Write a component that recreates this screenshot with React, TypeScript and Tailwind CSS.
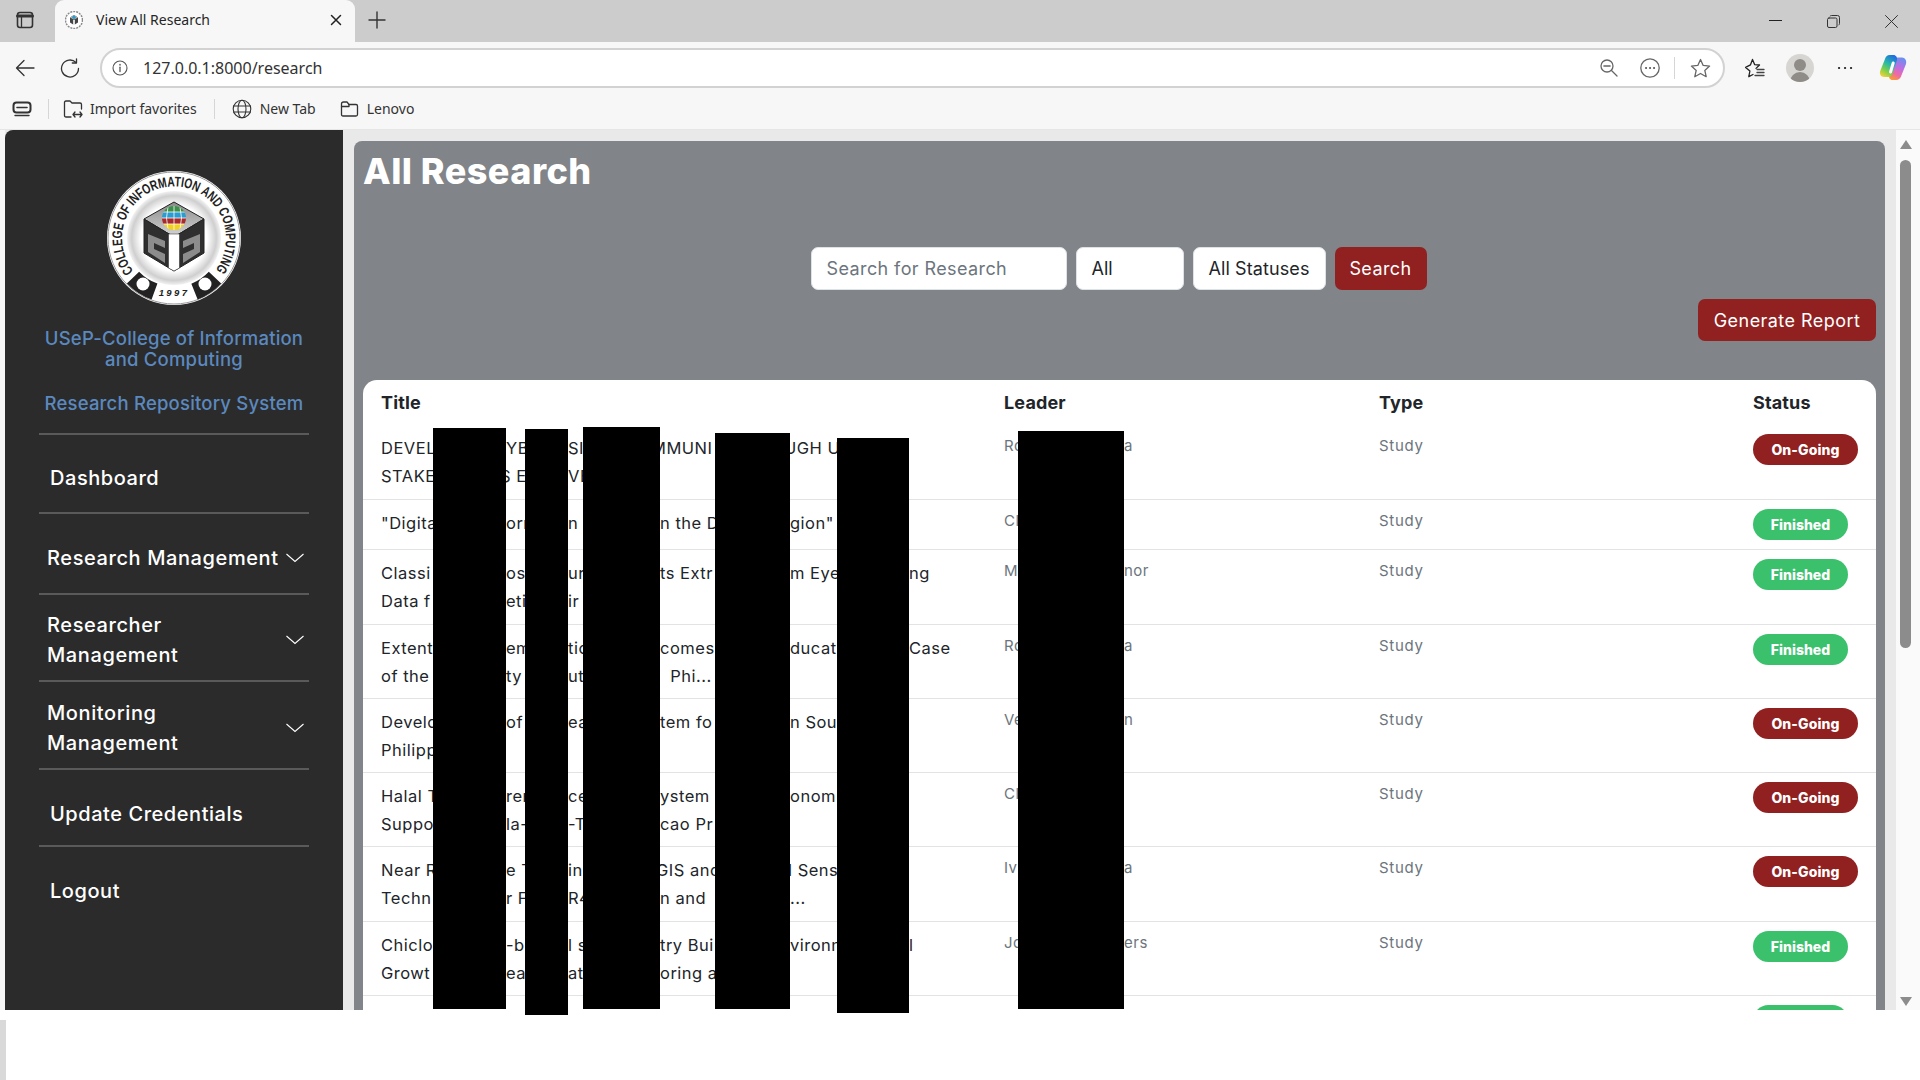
import React from "react";

const chrome = "font-['Noto_Sans','Open_Sans',sans-serif]";
const ui = "font-['Inter',sans-serif]";

function Logo() {
  return (
    <svg width="134" height="134" viewBox="0 0 134 134">
      <defs>
        <radialGradient id="ring" cx="50%" cy="50%" r="50%">
          <stop offset="70%" stopColor="#ffffff" />
          <stop offset="90%" stopColor="#cfcfcf" />
          <stop offset="100%" stopColor="#f2f2f2" />
        </radialGradient>
        <linearGradient id="topface" x1="0" y1="0" x2="0" y2="1">
          <stop offset="0%" stopColor="#8a8a8a" />
          <stop offset="100%" stopColor="#d5d5d5" />
        </linearGradient>
        <path id="arc" d="M26.5 100 A52 52 0 1 1 107.5 100" />
        <clipPath id="globe"><circle cx="67" cy="47" r="12" /></clipPath>
      </defs>
      <circle cx="67" cy="67" r="67" fill="#ffffff" />
      <circle cx="67" cy="67" r="66" fill="none" stroke="#9a9a9a" strokeWidth="1" />
      <circle cx="67" cy="67" r="47" fill="url(#ring)" />
      <text fontFamily="'Liberation Sans',sans-serif" fontWeight="700" fontSize="14" fill="#222222">
        <textPath href="#arc" textLength="232" lengthAdjust="spacingAndGlyphs">COLLEGE OF INFORMATION AND COMPUTING</textPath>
      </text>
      <path d="M26 106.6A57 57 0 0 0 47.5 120.6" fill="none" stroke="#222222" strokeWidth="17" />
      <path d="M87.5 120.6A57 57 0 0 0 108 106.6" fill="none" stroke="#222222" strokeWidth="17" />
      <circle cx="36" cy="113" r="6.5" fill="#ffffff" />
      <circle cx="98" cy="113" r="6.5" fill="#ffffff" />
      <text x="67" y="125" textAnchor="middle" fontFamily="'Liberation Sans',sans-serif" fontWeight="700" fontStyle="italic" fontSize="9.5" letterSpacing="2.4" fill="#222222">1997</text>
      <path d="M67 31L97 48L67 66L37 48Z" fill="url(#topface)" stroke="#222222" strokeWidth="1" />
      <path d="M37 48L67 66V100L37 82Z" fill="#2f2f2f" stroke="#222222" strokeWidth="1" />
      <path d="M97 48L67 66V100L97 82Z" fill="#2f2f2f" stroke="#222222" strokeWidth="1" />
      <path d="M41 63L58 70V77L47 72V78L58 83V92L41 81Z" fill="#8c8c8c" />
      <path d="M93 63L76 70V77L87 72V78L76 83V92L93 81Z" fill="#8c8c8c" />
      <path d="M61.5 63H72.5V97L67 100L61.5 97Z" fill="#ffffff" stroke="#222222" strokeWidth="0.5" />
      <g clipPath="url(#globe)">
        <rect x="55" y="35" width="24" height="6" fill="#3b8f4a" />
        <rect x="55" y="41" width="24" height="6" fill="#2b9ccf" />
        <rect x="55" y="47" width="24" height="6" fill="#a82a2a" />
        <rect x="55" y="53" width="24" height="6" fill="#f1d21e" />
        <path d="M55 41H79M55 47H79M55 53H79M67 35V59M61 36Q58 47 61 58M73 36Q76 47 73 58" stroke="#ffffff" strokeWidth="0.8" fill="none" />
      </g>
    </svg>
  );
}

function Favicon() {
  return (
    <svg width="18" height="18" viewBox="0 0 18 18">
      <circle cx="9" cy="9" r="8.5" fill="#ffffff" stroke="#8a8a8a" strokeWidth="1.5" strokeDasharray="2 1" />
      <path d="M9 4L13 6.4V11.4L9 14L5 11.4V6.4Z" fill="#444444" />
      <path d="M9 4L13 6.4L9 8.8L5 6.4Z" fill="#b5b5b5" />
      <circle cx="9" cy="6.2" r="1.7" fill="#2b9ccf" />
      <rect x="8.2" y="9" width="1.6" height="5" fill="#ffffff" />
    </svg>
  );
}

function I({ w, h, children }: { w: number; h: number; children: React.ReactNode }) {
  return (
    <svg width={w} height={h} viewBox={`0 0 ${w} ${h}`} fill="none" stroke="#333333" strokeWidth="1.3" strokeLinecap="round" strokeLinejoin="round" className="shrink-0">
      {children}
    </svg>
  );
}

function Copilot() {
  return (
    <svg width="28" height="27" viewBox="0 0 28 27" className="shrink-0">
      <defs>
        <linearGradient id="cpa" x1="0.7" y1="0" x2="0.2" y2="1">
          <stop offset="0%" stopColor="#1f6fe0" />
          <stop offset="40%" stopColor="#27b8a8" />
          <stop offset="70%" stopColor="#7bd04a" />
          <stop offset="100%" stopColor="#f4d03a" />
        </linearGradient>
        <linearGradient id="cpb" x1="0.7" y1="0" x2="0.3" y2="1">
          <stop offset="0%" stopColor="#6a8ff0" />
          <stop offset="45%" stopColor="#c56be0" />
          <stop offset="75%" stopColor="#f06aa0" />
          <stop offset="100%" stopColor="#f79a3a" />
        </linearGradient>
      </defs>
      <path d="M17 26C20 26 21.5 24 22.2 22L27 10C28 6.5 26 3.5 23 3.5H19C16.5 3.5 15 5 14.3 7L10 21C9.5 23.5 11 26 13.5 26Z" fill="url(#cpb)" />
      <path d="M11 1C8 1 6.5 3 6 5L1.2 17C0.2 20 2 23 5 23H9C11.5 23 13 21.5 13.7 19.5L18 6C18.5 3.5 17 1 14.5 1Z" fill="url(#cpa)" />
      <path d="M14.2 9L11.5 18" stroke="#ffffff" strokeWidth="3" strokeLinecap="round" />
    </svg>
  );
}

function TabBar() {
  return (
    <div className="flex h-[42px] items-end bg-[#cccccc]">
      <div className="flex h-[42px] w-[55px] items-center pb-[2px] pl-[16px]">
        <I w={18} h={18}>
          <rect x="1.5" y="1.5" width="15" height="15" rx="2.5" strokeWidth="1.6" />
          <path d="M1.5 5H16.5" strokeWidth="3" />
          <path d="M5.5 5V16" />
        </I>
      </div>
      <div className="flex h-[42px] w-[300px] items-center rounded-t-[9px] bg-[#f7f7f7] pb-[2px] pl-[10px] pr-[13px]">
        <Favicon />
        <span className="ml-[13px] flex-1 text-[14px] leading-none text-[#262626]">View All Research</span>
        <I w={12} h={12}>
          <path d="M1.5 1.5L10.5 10.5M10.5 1.5L1.5 10.5" stroke="#222222" strokeWidth="1.5" />
        </I>
      </div>
      <div className="flex h-[42px] items-center pb-[3px] pl-[13px]">
        <I w={18} h={18}>
          <path d="M9 1V17M1 9H17" strokeWidth="1.4" />
        </I>
      </div>
      <div className="flex-1" />
      <div className="flex h-[42px] items-start pt-[15px]">
        <div className="mr-[45px] mt-[5px] h-px w-[13px] bg-[#222222]" />
        <div className="mr-[45px]">
          <I w={13} h={13}>
            <rect x="0.5" y="3" width="9.5" height="9.5" rx="1.5" strokeWidth="1" />
            <path d="M3 1.2Q3.5 0.5 4.5 0.5H10.5Q12.5 0.5 12.5 2.5V8.5Q12.5 9.5 11.8 10" strokeWidth="1" />
          </I>
        </div>
        <div className="mr-[22px]">
          <I w={13} h={13}>
            <path d="M0.5 0.5L12.5 12.5M12.5 0.5L0.5 12.5" strokeWidth="1" />
          </I>
        </div>
      </div>
    </div>
  );
}

function Toolbar() {
  return (
    <div className="flex h-[46px] items-center bg-[#f7f7f7] pt-[5px]">
      <div className="ml-[15px]">
        <I w={20} h={18}>
          <path d="M19 9H1.5M9 1.5L1.5 9L9 16.5" />
        </I>
      </div>
      <div className="ml-[25px]">
        <I w={20} h={20}>
          <path d="M16.5 0.8V5H12.3" />
          <path d="M16 4.5A8.5 8.5 0 1 0 18.5 10.5" />
        </I>
      </div>
      <div className="ml-[20px] flex h-[40px] w-[1625px] items-center rounded-full border-2 border-[#d2d2d2] bg-white">
        <div className="ml-[10px]">
          <I w={16} h={16}>
            <circle cx="8" cy="8" r="7" stroke="#555555" strokeWidth="1.1" />
            <path d="M8 7.2V11.5" stroke="#555555" />
            <path d="M8 4.6V4.9" stroke="#555555" strokeWidth="1.5" />
          </I>
        </div>
        <span className="ml-[15px] flex-1 text-[16px] leading-none text-[#333333]">127.0.0.1:8000/research</span>
        <div className="mr-[22px]">
          <I w={18} h={18}>
            <circle cx="7" cy="7" r="6" stroke="#666666" />
            <path d="M4 7H10" stroke="#666666" strokeWidth="1.6" />
            <path d="M11.5 11.5L17 17" stroke="#666666" />
          </I>
        </div>
        <div className="mr-[14px]">
          <I w={20} h={20}>
            <circle cx="10" cy="10" r="9.2" stroke="#666666" />
            <path d="M6 10H6.1M10 10H10.1M14 10H14.1" stroke="#555555" strokeWidth="2" />
          </I>
        </div>
        <div className="mr-[15px] h-[22px] w-px bg-[#d6d6d6]" />
        <div className="mr-[12px]">
          <I w={21} h={20}>
            <path d="M10.5 1.5L13.2 7.4L19.6 8.1L14.8 12.4L16.2 18.7L10.5 15.5L4.8 18.7L6.2 12.4L1.4 8.1L7.8 7.4Z" stroke="#666666" />
          </I>
        </div>
      </div>
      <div className="ml-[19px]">
        <I w={21} h={20}>
          <path d="M8.5 1.5L10.6 6.6L15.5 7L12 10.4M4.8 18.7L5.9 13L1.6 9.4L6.4 6.9L8.5 1.5M4.8 18.7L9 16.5" stroke="#222222" />
          <path d="M13 11.5H20M13 14.5H20M11 17.5H20" stroke="#444444" />
        </I>
      </div>
      <div className="relative ml-[21px] flex h-[28px] w-[28px] items-end justify-center overflow-hidden rounded-full bg-[#d6d5d2]">
        <div className="absolute left-[8px] top-[5px] h-[12px] w-[12px] rounded-full bg-[#8f8c88]" />
        <div className="h-[10px] w-[20px] rounded-t-[10px] bg-[#8f8c88]" />
      </div>
      <div className="ml-[23px]">
        <I w={16} h={4}>
          <path d="M2 2H2.1M8 2H8.1M14 2H14.1" stroke="#222222" strokeWidth="2.2" />
        </I>
      </div>
      <div className="ml-[26px]">
        <Copilot />
      </div>
    </div>
  );
}

function Bookmarks() {
  const label = "text-[14px] leading-none text-[#333333]";
  return (
    <div className="flex h-[42px] items-center border-b border-[#e6e6e6] bg-[#f7f7f7]">
      <div className="ml-[12px]">
        <I w={21} h={18}>
          <rect x="1.5" y="2.5" width="17" height="10" rx="3" strokeWidth="2" />
          <path d="M5 7.5H15" strokeWidth="1.6" />
          <path d="M3 15.5H17" strokeWidth="1.4" />
        </I>
      </div>
      <div className="ml-[15px] h-[20px] w-px bg-[#d6d6d6]" />
      <div className="ml-[14px]">
        <I w={20} h={20}>
          <path d="M8 18H3Q1.5 18 1.5 16.5V3.5Q1.5 2 3 2H7L9 4H17Q18.5 4 18.5 5.5V10" />
          <path d="M10 15.5H19M12 13L10 15.5L12 18M17 13L19 15.5L17 18" />
        </I>
      </div>
      <span className={`ml-[7px] ${label}`}>Import favorites</span>
      <div className="ml-[17px] h-[20px] w-px bg-[#d6d6d6]" />
      <div className="ml-[17px]">
        <I w={20} h={20}>
          <circle cx="10" cy="10" r="8.8" strokeWidth="1.1" />
          <ellipse cx="10" cy="10" rx="4" ry="8.8" strokeWidth="1.1" />
          <path d="M1.5 7H18.5M1.5 13H18.5" strokeWidth="1.1" />
        </I>
      </div>
      <span className={`ml-[8px] ${label}`}>New Tab</span>
      <div className="ml-[24px]">
        <I w={19} h={18}>
          <path d="M1.5 4Q1.5 2 3.5 2H7L9 4.5H16Q17.5 4.5 17.5 6V14.5Q17.5 16 16 16H3Q1.5 16 1.5 14.5Z" />
          <path d="M1.5 6.5H9L9 4.5" />
        </I>
      </div>
      <span className={`ml-[8px] ${label}`}>Lenovo</span>
    </div>
  );
}

function Chevron() {
  return (
    <svg width="18" height="10" viewBox="0 0 18 10" fill="none" stroke="#ffffff" strokeWidth="1.1" className="shrink-0">
      <path d="M0.5 1L9 8.5L17.5 1" />
    </svg>
  );
}

const hr = "mx-[34px] h-[2px] shrink-0 bg-[#5a5a5a]";
const link = "mx-[34px] flex items-center px-[11px] text-[20px] font-medium leading-[30px] tracking-[0.55px] text-white";
const drop = "ml-[42px] mr-[39px] flex items-center justify-between text-[20px] font-medium leading-[30px] tracking-[0.6px] text-white";

function Sidebar() {
  return (
    <aside className={`flex h-[880px] w-[338px] shrink-0 flex-col overflow-hidden rounded-tl-[8px] bg-[#2b2b2b] ${ui}`}>
      <div className="mt-[41px] flex justify-center">
        <Logo />
      </div>
      <div className="mt-[23px] text-center text-[18.5px] font-medium leading-[21px] text-[#5b89bf]">
        <p className="tracking-[0.2px]">USeP-College of Information</p>
        <p className="tracking-[0.2px]">and Computing</p>
        <p className="mt-[23px] tracking-[0.2px]">Research Repository System</p>
      </div>
      <div className={`mt-[19px] ${hr}`} />
      <div className={`h-[77px] pt-[9px] ${link}`}>Dashboard</div>
      <div className={hr} />
      <div className={`h-[79px] pt-[9px] ${drop}`}>
        <span className="whitespace-nowrap">Research Management</span>
        <Chevron />
      </div>
      <div className={hr} />
      <div className={`h-[85px] pt-[5px] ${drop}`}>
        <span>Researcher<br />Management</span>
        <Chevron />
      </div>
      <div className={hr} />
      <div className={`h-[86px] pt-[5px] ${drop}`}>
        <span>Monitoring<br />Management</span>
        <Chevron />
      </div>
      <div className={hr} />
      <div className={`h-[75px] pt-[12px] ${link}`}>Update Credentials</div>
      <div className={hr} />
      <div className={`h-[88px] ${link}`}>Logout</div>
    </aside>
  );
}

type Row = { h: string; lines: string[][]; leader: [string, string]; on: boolean };

const rows: Row[] = [
  { h: "h-[75px]", lines: [["DEVELO", "YBI", "SI", "MMUNI", "UGH U", ""], ["STAKE", "S EN", "VE", "", "", ""]], leader: ["Ro", "a"], on: true },
  { h: "h-[50px]", lines: [['"Digita', "orn", "n", "n the D", 'gion"', ""]], leader: ["Cl", ""], on: false },
  { h: "h-[75px]", lines: [["Classi", "oss", "ur", "ts Extr", "m Eye", "ng"], ["Data f", "etin", "ir", "", "", ""]], leader: ["M", "nor"], on: false },
  { h: "h-[74px]", lines: [["Extent", "em", "tic", "comes-", "ducat", "Case"], ["of the", "ty c", "ut", "  Phi...", "", ""]], leader: ["Ro", "a"], on: false },
  { h: "h-[74px]", lines: [["Develo", "of T", "ea", "tem fo", "n Sou", ""], ["Philipp", "", "", "", "", ""]], leader: ["Ve", "n"], on: true },
  { h: "h-[74px]", lines: [["Halal T", "ren", "ce", "ystem", "onom", ""], ["Suppo", "la-", "-T", "cao Pr", "", ""]], leader: ["Cl", ""], on: true },
  { h: "h-[75px]", lines: [["Near R", "e T", "in", "GIS and", "l Sens", ""], ["Techn", "r F", "R4", "n and", "...", ""]], leader: ["Iv", "a"], on: true },
  { h: "h-[74px]", lines: [["Chiclo", "-b", "l s", "try Bui", "vironn", "l"], ["Growt", "eal", "at", "oring a", "", ""]], leader: ["Jo", "ers"], on: false },
];

function nudge(t: string) {
  if (t === "MMUNI") return "-ml-[9px]";
  if (t === "UGH U") return "-ml-[6px]";
  if (t === "S EN") return "-ml-[6px]";
  if (t === "GIS and") return "-ml-[4px]";
  if (t === "l Sens") return "-ml-[2px]";
  return "";
}

function Badge({ on }: { on: boolean }) {
  return on ? (
    <span className="flex h-[31px] w-[105px] items-center justify-center rounded-[16px] bg-[#912120] text-[14px] font-extrabold leading-none tracking-[0.1px] text-white">On-Going</span>
  ) : (
    <span className="flex h-[31px] w-[95px] items-center justify-center rounded-[16px] bg-[#3bc16c] text-[14px] font-extrabold leading-none text-white">Finished</span>
  );
}

const cols = "grid grid-cols-[623px_375px_374px_141px]";

function Table() {
  return (
    <div className="h-[700px] w-[1513px] overflow-hidden rounded-t-[14px] bg-white">
      <div className={`${cols} h-[45px] items-center text-[18px] font-bold tracking-[0.15px] text-[#212529]`}>
        <div className="pl-[18px]">Title</div>
        <div className="pl-[18px]">Leader</div>
        <div className="pl-[18px]">Type</div>
        <div className="pl-[18px]">Status</div>
      </div>
      {rows.map((r, i) => (
        <div key={i} className={`${cols} ${r.h} border-b border-[#e2e3e5] pt-[9px]`}>
          <div className="pl-[18px]">
            {r.lines.map((l, j) => (
              <div key={j} className="grid h-[28px] grid-cols-[125px_62px_92px_130px_119px_1fr] text-[16.5px] leading-[28px] tracking-[0.5px] text-[#212529]">
                {l.map((t, k) => (
                  <span key={k} className={`whitespace-pre ${nudge(t)}`}>{t}</span>
                ))}
              </div>
            ))}
          </div>
          <div className="grid grid-cols-[120px_1fr] pl-[18px] text-[15px] leading-[24px] tracking-[0.5px] text-[#6c757d]">
            <span>{r.leader[0]}</span>
            <span>{r.leader[1]}</span>
          </div>
          <div className="pl-[18px] text-[15px] leading-[24px] tracking-[0.7px] text-[#6c757d]">Study</div>
          <div className="pl-[18px]">
            <Badge on={r.on} />
          </div>
        </div>
      ))}
      <div className={`${cols} pt-[9px]`}>
        <div />
        <div />
        <div />
        <div className="pl-[18px]">
          <div className="h-[31px] w-[95px] rounded-[16px] bg-[#3bc16c]" />
        </div>
      </div>
    </div>
  );
}

function Main() {
  const field = "flex h-[43px] items-center whitespace-nowrap rounded-[7px] bg-white px-[15px] pt-[1px] text-[18px] leading-none border border-[#dee2e6]";
  return (
    <main className={`ml-[11px] mt-[11px] flex h-[869px] w-[1531px] shrink-0 flex-col rounded-t-[8px] bg-[#818488] pl-[9px] ${ui}`}>
      <h1 className="mt-[8px] text-[36px] font-extrabold leading-[44px] tracking-[0.45px] text-white">All Research</h1>
      <div className="mt-[54px] flex justify-center gap-[9px] pr-[11px]">
        <div className={`${field} w-[256px] tracking-[0.4px] text-[#6c757d]`}>Search for Research</div>
        <div className={`${field} w-[108px] text-[#212529]`}>All</div>
        <div className={`${field} w-[133px] tracking-[0.1px] text-[#212529]`}>All Statuses</div>
        <div className="flex h-[43px] w-[92px] items-center justify-center rounded-[7px] bg-[#912120] pt-[1px] text-[18px] leading-none tracking-[0.4px] text-white">Search</div>
      </div>
      <div className="mt-[9px] flex justify-end pr-[9px]">
        <div className="flex h-[42px] w-[178px] items-center justify-center rounded-[7px] bg-[#912120] pt-[1px] text-[18px] leading-none tracking-[0.45px] text-white">Generate Report</div>
      </div>
      <div className="ml-[1px] mr-[9px] mt-[9px] h-[3px] bg-[#9da1a5]" />
      <div className="mt-[30px]">
        <Table />
      </div>
    </main>
  );
}

function Scrollbar() {
  return (
    <div className="flex h-[880px] flex-1 bg-[#e9e9e9]">
      <div className="w-[11px]" />
      <div className="relative flex-1 bg-[#fafafa]">
        <div className="absolute left-[4px] top-[10px] h-0 w-0 border-x-[6px] border-b-[9px] border-x-transparent border-b-[#8c8c8c]" />
        <div className="absolute left-[4px] top-[30px] h-[488px] w-[11px] rounded-full bg-[#8c8c8c]" />
        <div className="absolute bottom-[4px] left-[4px] h-0 w-0 border-x-[6px] border-t-[9px] border-x-transparent border-t-[#8c8c8c]" />
      </div>
    </div>
  );
}

const bars = [
  "left-[433px] top-[428px] h-[581px] w-[73px]",
  "left-[525px] top-[429px] h-[586px] w-[43px]",
  "left-[583px] top-[427px] h-[582px] w-[77px]",
  "left-[715px] top-[433px] h-[576px] w-[75px]",
  "left-[837px] top-[438px] h-[575px] w-[72px]",
  "left-[1018px] top-[431px] h-[578px] w-[106px]",
];

export default function App() {
  return (
    <div className={`relative h-[1080px] w-[1920px] overflow-hidden bg-white ${chrome}`}>
      <TabBar />
      <Toolbar />
      <Bookmarks />
      <div className="flex h-[880px] overflow-hidden bg-[#e9e9e9]">
        <div className="w-[5px] shrink-0 bg-[#f7f7f7]" />
        <Sidebar />
        <Main />
        <Scrollbar />
      </div>
      <div className="mt-[10px] h-[60px] w-[6px] bg-[#d9d9d9]" />
      {bars.map((b) => (
        <div key={b} className={`absolute bg-black ${b}`} />
      ))}
    </div>
  );
}
